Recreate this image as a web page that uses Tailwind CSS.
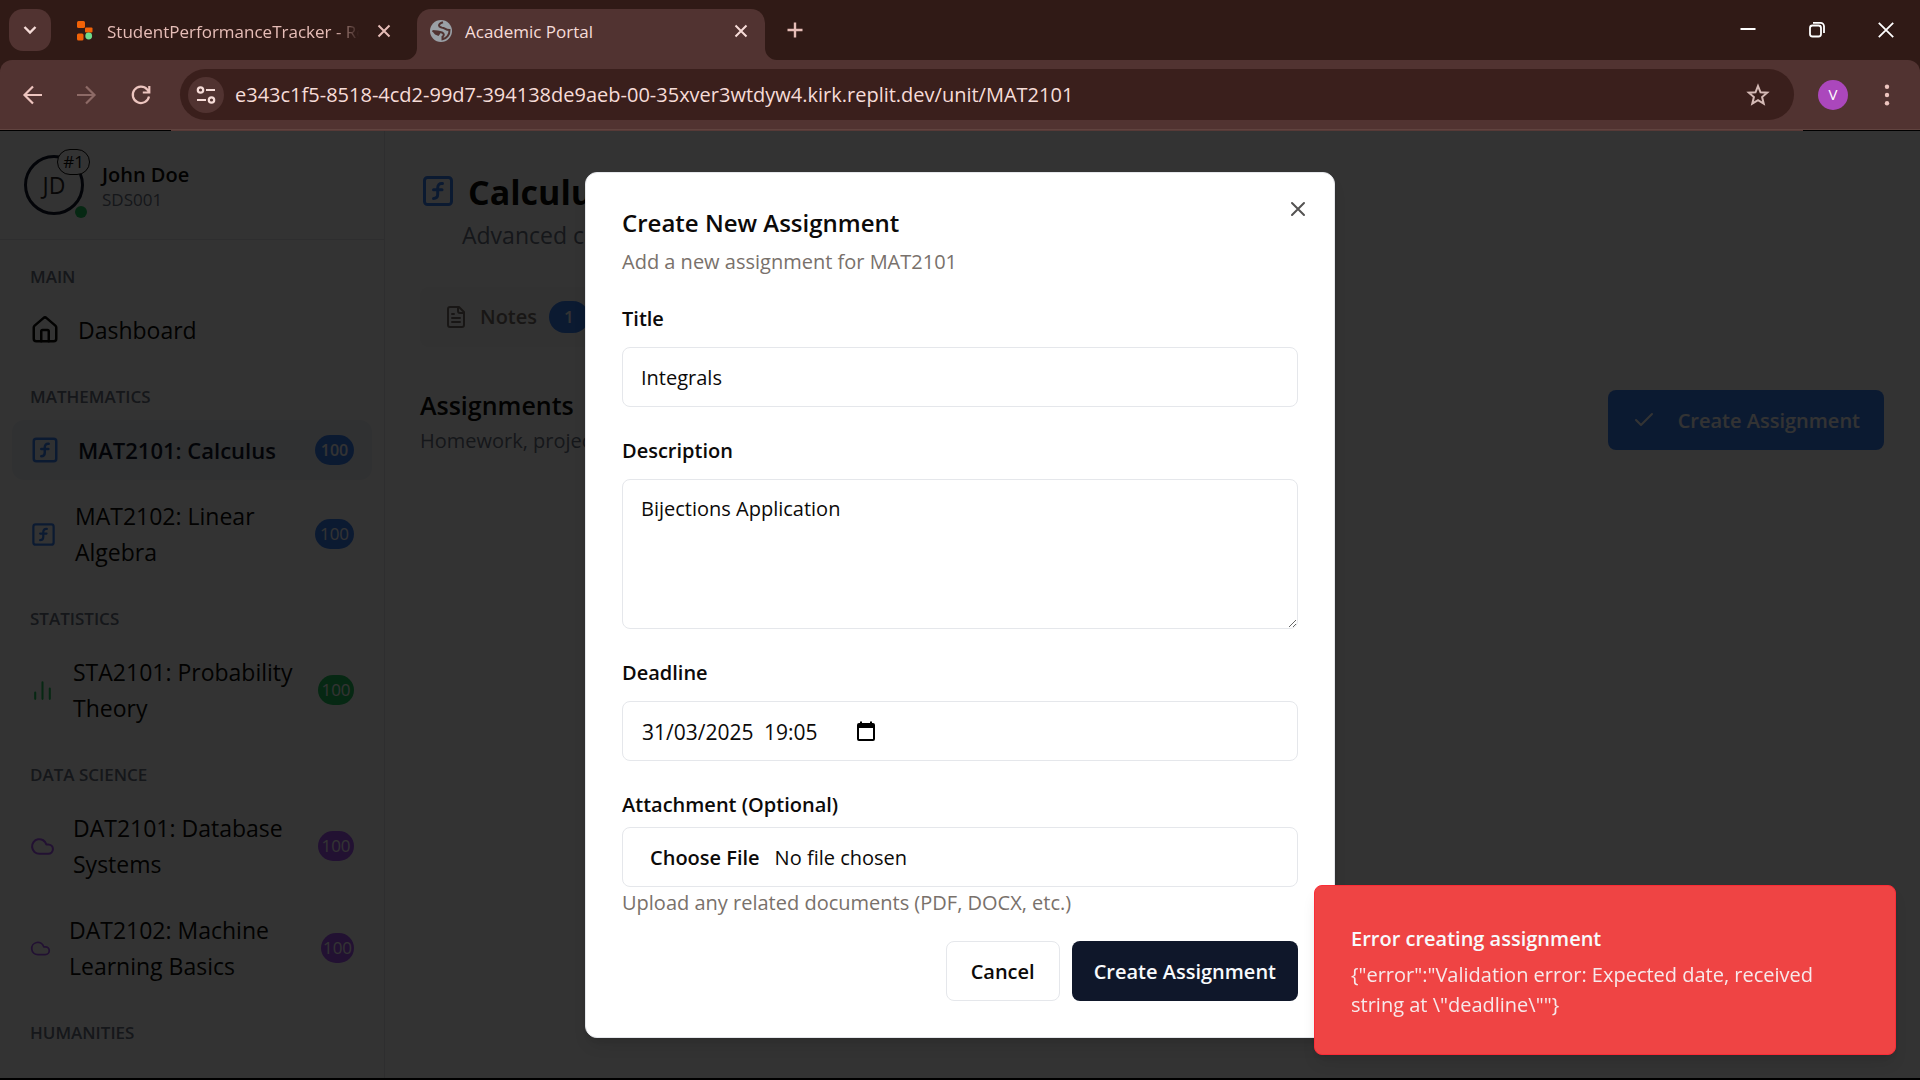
<!DOCTYPE html>
<html lang="en">
<head>
<meta charset="utf-8">
<meta name="viewport" content="width=device-width, initial-scale=1">
<title>Academic Portal</title>
<script src="https://cdn.jsdelivr.net/npm/@tailwindcss/browser@4"></script>
</head>
<body class="flex h-screen flex-col overflow-hidden bg-black font-['Open_Sans','Noto_Sans',sans-serif] text-stone-950">

<!-- Browser tab strip -->
<header class="shrink-0 bg-[#301a16] text-[17px] text-[#f6dcd8]">
  <div class="flex h-[60px] items-end">
    <button aria-label="Search tabs" class="mb-[9px] ml-[9px] flex size-[42px] items-center justify-center rounded-[14px] bg-[#513331]">
      <svg class="size-6" viewBox="0 0 24 24" fill="none" stroke="currentColor" stroke-width="2.4"><path d="M6.500 9l5.500 5.500L17.500 9"/></svg>
    </button>
    <div class="flex h-[51px] w-[366px] items-center pb-[8px] pl-[26px] text-[#e6bdb7]">
      <svg class="h-[20px] w-[16px] shrink-0" viewBox="0 0 16 20"><rect x="0" y="0" width="8" height="7" rx="1.500" fill="#f26207"/><rect x="8" y="6.500" width="7.500" height="5" rx="1" fill="#f26207"/><rect x="0" y="12.500" width="6.500" height="7" rx="1.500" fill="#f26207"/><circle cx="11.700" cy="15" r="3.400" fill="#6fdc8c"/></svg>
      <span class="ml-[14px] w-[252px] overflow-hidden whitespace-nowrap pt-0.5 mask-r-from-90% mask-r-to-100%">StudentPerformanceTracker - Replit</span>
      <button aria-label="Close tab" class="ml-4"><svg class="size-[18px]" viewBox="0 0 18 18" fill="none" stroke="currentColor" stroke-width="2"><path d="M3.500 3.500l11 11M14.500 3.500l-11 11"/></svg></button>
    </div>
    <div class="relative flex h-[51px] w-[348px] items-center rounded-t-[14px] bg-[#513331] pb-[8px] pl-[13px] pr-[15px]">
      <svg class="absolute -left-3 bottom-0 size-3" viewBox="0 0 12 12"><path d="M12 0v12H0A12 12 0 0 0 12 0z" fill="#513331"/></svg>
      <svg class="absolute -right-3 bottom-0 size-3" viewBox="0 0 12 12"><path d="M0 0v12h12A12 12 0 0 1 0 0z" fill="#513331"/></svg>
      <svg class="size-[22px] shrink-0" viewBox="0 0 22 22"><circle cx="11" cy="11" r="11" fill="#9aa0a6"/><path d="M13 2.200C10.500 3 9 3.800 9 5.500c0 1.500 1.500 1.700 3 2.200M12 7.700c2.500-.3 3.200 2.300 7.500 2.300.3 4.500-3 8.500-7 9.200v-2.500c2-1.200 1.600-3.300-.5-4.200-2.500-1-4.500-1.500-9.500-1.500" fill="none" stroke="#513331" stroke-width="2"/><path d="M2 11h5.500c2 0 3.500 1.500 2.500 3l-1.500 2-3.500-1.500z" fill="#513331"/></svg>
      <span class="ml-[13px] flex-1 pt-0.5">Academic Portal</span>
      <button aria-label="Close tab"><svg class="size-[18px]" viewBox="0 0 18 18" fill="none" stroke="currentColor" stroke-width="2"><path d="M3.500 3.500l11 11M14.500 3.500l-11 11"/></svg></button>
    </div>
    <button aria-label="New tab" class="mb-[18px] ml-[18px] text-[#e6bdb7]"><svg class="size-6" viewBox="0 0 24 24" fill="none" stroke="currentColor" stroke-width="2.400"><path d="M12 4.500v15M4.500 12h15"/></svg></button>
    <div class="mb-[18px] ml-auto mr-[22px] flex items-center gap-[45px] text-white">
      <button aria-label="Minimise"><svg class="size-6" viewBox="0 0 24 24" fill="none" stroke="currentColor" stroke-width="2"><path d="M4.500 11h15"/></svg></button>
      <button aria-label="Restore"><svg class="size-6" viewBox="0 0 24 24" fill="none" stroke="currentColor" stroke-width="1.800"><rect x="5" y="7.500" width="11" height="11" rx="2.500"/><path d="M8 4.800h7.500a3.500 3.500 0 0 1 3.500 3.500V15"/></svg></button>
      <button aria-label="Close"><svg class="size-6" viewBox="0 0 24 24" fill="none" stroke="currentColor" stroke-width="1.800"><path d="M4.800 4.800l14.400 14.400M19.200 4.800L4.800 19.200"/></svg></button>
    </div>
  </div>

  <!-- Toolbar -->
  <div class="flex h-[70px] items-center rounded-t-[12px] border-b border-[#60433f] bg-[#513331] pr-[21px] text-[#edc5bf]">
    <button aria-label="Back" class="ml-[21px]"><svg class="size-6" viewBox="0 0 24 24" fill="none" stroke="currentColor" stroke-width="2.200"><path d="M21 12H4M12 3.500L3.500 12l8.500 8.500"/></svg></button>
    <button aria-label="Forward" class="ml-[29px] text-[#8d6a66]"><svg class="size-6" viewBox="0 0 24 24" fill="none" stroke="currentColor" stroke-width="2.200"><path d="M3 12h17M12 3.500l8.500 8.500-8.500 8.500"/></svg></button>
    <button aria-label="Reload" class="ml-[31px]"><svg class="size-6" viewBox="0 0 24 24" fill="none" stroke="currentColor" stroke-width="2.200"><path d="M20 13.500A8.200 8.200 0 1 1 18.200 6.500L20 8.500M20.300 3v6.500h-6.500"/></svg></button>
    <div class="ml-[27px] flex h-[51px] flex-1 items-center rounded-full bg-[#3a1f1c] pl-2 pr-6">
      <button aria-label="View site information" class="flex size-9 items-center justify-center rounded-full bg-[#513331] text-[#f6dcd8]"><svg class="size-6" viewBox="0 0 24 24" fill="none" stroke="currentColor" stroke-width="2.200"><circle cx="6.500" cy="7" r="2.700"/><path d="M12 7h9M3 17h9"/><circle cx="17.500" cy="17" r="2.700"/></svg></button>
      <input type="text" aria-label="Address" value="e343c1f5-8518-4cd2-99d7-394138de9aeb-00-35xver3wtdyw4.kirk.replit.dev/unit/MAT2101" class="ml-[11px] min-w-0 flex-1 bg-transparent text-[20px] text-[#f6dcd8] outline-none">
      <button aria-label="Bookmark"><svg class="size-6" viewBox="0 0 24 24" fill="none" stroke="#d5bab6" stroke-width="2"><path d="M12 3l2.500 6.300 6.700.4-5.100 4.400 1.600 6.600L12 17.100l-5.700 3.600 1.600-6.600-5.100-4.400 6.700-.4z"/></svg></button>
    </div>
    <button aria-label="Profile" class="ml-6 flex size-[30px] items-center justify-center rounded-full bg-[#ab47bc] text-[15px] text-white">V</button>
    <button aria-label="Menu" class="ml-[27px]"><svg class="size-6" viewBox="0 0 24 24" fill="currentColor"><circle cx="12" cy="3.800" r="2.200"/><circle cx="12" cy="12" r="2.200"/><circle cx="12" cy="20.200" r="2.200"/></svg></button>
  </div>
  <div class="h-px bg-black pl-[171px] pr-[117px]"><div class="h-px bg-[#573a37]"></div></div>
</header>

<!-- Page -->
<div class="relative mb-[2px] flex min-h-0 flex-1 overflow-hidden bg-white">
  <aside class="w-[385px] shrink-0 border-r border-gray-200">
    <div class="flex items-center gap-[18px] border-b border-gray-200 p-6">
      <div class="relative flex size-[60px] items-center justify-center rounded-full border-3 border-slate-900 text-[23px] text-stone-800">JD
        <span class="absolute -right-[9px] -top-[9px] rounded-full border border-stone-950 bg-white px-[5px] text-[17px] leading-6 text-stone-950">#1</span>
        <span class="absolute -bottom-[6px] -right-[6px] size-3 rounded-full bg-[#22c55e]"></span>
      </div>
      <div class="pt-1">
        <p class="text-[20px] font-semibold leading-[26px]">John Doe</p>
        <p class="text-[17px] leading-6 text-gray-500">SDS001</p>
      </div>
    </div>
    <nav class="flex flex-col gap-6 px-3 py-6 text-[23px] leading-9">
      <section>
        <h2 class="mb-3 px-[18px] pt-[2px] text-[17px] font-semibold leading-[22px] text-gray-500">MAIN</h2>
        <a href="#" class="flex items-center gap-[18px] rounded-xl px-[18px] py-3">
          <svg class="size-[30px] shrink-0" viewBox="0 0 24 24" fill="none" stroke="currentColor" stroke-width="2" stroke-linecap="round" stroke-linejoin="round"><path d="M15 21v-8a1 1 0 0 0-1-1h-4a1 1 0 0 0-1 1v8"/><path d="M3 10a2 2 0 0 1 .709-1.528l7-5.999a2 2 0 0 1 2.582 0l7 5.999A2 2 0 0 1 21 10v9a2 2 0 0 1-2 2H5a2 2 0 0 1-2-2z"/></svg>
          Dashboard</a>
      </section>
      <section>
        <h2 class="mb-3 px-[18px] pt-[2px] text-[17px] font-semibold leading-[22px] text-gray-500">MATHEMATICS</h2>
        <a href="#" class="flex items-center gap-[18px] rounded-xl bg-slate-100 px-[18px] py-3 text-[22px] font-semibold text-slate-900">
          <svg class="size-[30px] shrink-0 text-[#3b82f6]" viewBox="0 0 24 24" fill="none" stroke="currentColor" stroke-width="2" stroke-linecap="round" stroke-linejoin="round"><rect width="18" height="18" x="3" y="3" rx="2"/><path d="M9 17c2 0 2.800-1 2.800-2.800V10c0-2 1-3.300 3.200-3M9 11.200h5.700"/></svg>
          <span class="flex-1">MAT2101: Calculus</span>
          <span class="flex h-[30px] w-[39px] justify-center rounded-full bg-[#3b82f6] text-[16px] leading-[30px] text-white">100</span></a>
        <a href="#" class="mt-[6px] flex items-center gap-[18px] rounded-xl px-[18px] py-3">
          <svg class="size-[27px] shrink-0 text-[#3b82f6]" viewBox="0 0 24 24" fill="none" stroke="currentColor" stroke-width="2" stroke-linecap="round" stroke-linejoin="round"><rect width="18" height="18" x="3" y="3" rx="2"/><path d="M9 17c2 0 2.800-1 2.800-2.800V10c0-2 1-3.300 3.200-3M9 11.200h5.700"/></svg>
          <span class="flex-1">MAT2102: Linear<br>Algebra</span>
          <span class="flex h-[30px] w-[39px] justify-center rounded-full bg-[#3b82f6] text-[17px] leading-[30px] text-white">100</span></a>
      </section>
      <section>
        <h2 class="mb-3 px-[18px] pt-[2px] text-[17px] font-semibold leading-[22px] text-gray-500">STATISTICS</h2>
        <a href="#" class="flex items-center gap-[18px] rounded-xl px-[18px] py-3">
          <svg class="size-[25px] shrink-0 text-[#22c55e]" viewBox="0 0 24 24" fill="none" stroke="currentColor" stroke-width="2" stroke-linecap="round" stroke-linejoin="round"><path d="M5 20v-6M12 20V4M19 20V10"/></svg>
          <span class="flex-1 whitespace-nowrap">STA2101: Probability<br>Theory</span>
          <span class="-ml-[18px] flex h-[30px] w-9 shrink-0 justify-center rounded-full bg-[#22c55e] text-[17px] leading-[30px] text-white">100</span></a>
      </section>
      <section>
        <h2 class="mb-3 px-[18px] pt-[2px] text-[17px] font-semibold leading-[22px] text-gray-500">DATA SCIENCE</h2>
        <a href="#" class="flex items-center gap-[18px] rounded-xl px-[18px] py-3">
          <svg class="size-[25px] shrink-0 text-[#a855f7]" viewBox="0 0 24 24" fill="none" stroke="currentColor" stroke-width="2" stroke-linecap="round" stroke-linejoin="round"><path d="M17.500 19H9a7 7 0 1 1 6.710-9h1.790a4.500 4.500 0 1 1 0 9Z"/></svg>
          <span class="flex-1 whitespace-nowrap">DAT2101: Database<br>Systems</span>
          <span class="-ml-[18px] flex h-[30px] w-9 shrink-0 justify-center rounded-full bg-[#a855f7] text-[17px] leading-[30px] text-white">100</span></a>
        <a href="#" class="mt-[6px] flex items-center gap-[18px] rounded-xl px-[18px] py-3">
          <svg class="size-[21px] shrink-0 text-[#a855f7]" viewBox="0 0 24 24" fill="none" stroke="currentColor" stroke-width="2" stroke-linecap="round" stroke-linejoin="round"><path d="M17.500 19H9a7 7 0 1 1 6.710-9h1.790a4.500 4.500 0 1 1 0 9Z"/></svg>
          <span class="flex-1 whitespace-nowrap">DAT2102: Machine<br>Learning Basics</span>
          <span class="-ml-[18px] flex h-[30px] w-[33px] shrink-0 justify-center rounded-full bg-[#a855f7] text-[17px] leading-[30px] text-white">100</span></a>
      </section>
      <section>
        <h2 class="px-[18px] pt-[2px] text-[17px] font-semibold leading-[22px] text-gray-500">HUMANITIES</h2>
      </section>
    </nav>
  </aside>

  <main class="min-w-0 flex-1 py-9 pl-[35px] pr-9">
    <div class="flex items-center gap-3">
      <svg class="size-9 text-[#3b82f6]" viewBox="0 0 24 24" fill="none" stroke="currentColor" stroke-width="2" stroke-linecap="round" stroke-linejoin="round"><rect width="18" height="18" x="3" y="3" rx="2"/><path d="M9 17c2 0 2.800-1 2.800-2.800V10c0-2 1-3.300 3.200-3M9 11.200h5.700"/></svg>
      <h1 class="pt-[2px] text-[34px] font-bold leading-[46px]">Calculus</h1>
    </div>
    <p class="mb-[34px] ml-[42px] mt-[2px] text-[23px] leading-9 text-gray-500">Advanced calculus</p>
    <div class="inline-flex h-[60px] items-center rounded-lg bg-stone-50 px-6 text-stone-500">
      <button class="flex items-center text-[20px] font-semibold">
        <svg class="mr-3 size-6" viewBox="0 0 24 24" fill="none" stroke="currentColor" stroke-width="2" stroke-linecap="round" stroke-linejoin="round"><path d="M15 2H6a2 2 0 0 0-2 2v16a2 2 0 0 0 2 2h12a2 2 0 0 0 2-2V7Z"/><path d="M14 2v4a2 2 0 0 0 2 2h4M10 9H8M16 13H8M16 17H8"/></svg>
        Notes <span class="ml-3 rounded-full bg-[#3b82f6] px-[15px] text-[17px] leading-8 text-white">1</span></button>
    </div>
    <div class="mt-9 flex items-center justify-between">
      <div class="pt-[2px]">
        <h2 class="text-[25px] font-semibold leading-[40px]">Assignments</h2>
        <p class="text-[20px] leading-[32px] text-gray-500">Homework, projects</p>
      </div>
      <button class="flex h-[60px] items-center rounded-lg bg-[#3b82f6] px-6 text-[20px] font-semibold text-white">
        <svg class="mr-[22px] size-6" viewBox="0 0 24 24" fill="none" stroke="currentColor" stroke-width="2" stroke-linecap="round" stroke-linejoin="round"><path d="M20 6 9 17l-5-5"/></svg>
        <span class="pt-[2px]">Create Assignment</span></button>
    </div>
  </main>

  <!-- Dialog -->
  <div class="absolute inset-0 flex items-center justify-center bg-black/80">
    <form role="dialog" aria-labelledby="dialog-title" class="relative w-[750px] rounded-xl border border-gray-200 bg-white p-9 text-[20px] leading-[30px] shadow-lg">
      <h2 id="dialog-title" class="text-[24px] font-semibold leading-[28px]">Create New Assignment</h2>
      <p class="mt-[10px] text-stone-500">Add a new assignment for MAT2101</p>
      <label for="title" class="mb-3 mt-[22px] block pt-1 font-semibold leading-8">Title</label>
      <input id="title" type="text" value="Integrals" class="block h-[60px] w-full rounded-lg border border-gray-200 px-[18px] pt-[2px] outline-none">
      <label for="description" class="mb-3 mt-6 block pt-1 font-semibold leading-8">Description</label>
      <textarea id="description" class="block h-[150px] w-full rounded-lg border border-gray-200 px-[18px] py-[14px] outline-none">Bijections Application</textarea>
      <label for="deadline" class="mb-3 mt-6 block pt-1 font-semibold leading-8">Deadline</label>
      <div class="flex h-[60px] items-center rounded-lg border border-gray-200 px-[18px]">
        <input id="deadline" type="text" value="31/03/2025" class="w-[122px] pl-px pt-[2px] text-[21px] outline-none">
        <input type="text" aria-label="Deadline time" value="19:05" class="w-[91px] pl-px pt-[2px] text-[21px] outline-none">
        <button type="button" aria-label="Show calendar"><svg class="size-6" viewBox="0 0 24 24"><path d="M19 4h-1V2.500h-2V4H8V2.500H6V4H5a2 2 0 0 0-2 2v14a2 2 0 0 0 2 2h14a2 2 0 0 0 2-2V6a2 2 0 0 0-2-2zm0 16H5V9h14z"/></svg></button>
      </div>
      <label for="attachment" class="mb-[6px] mt-6 block pt-1 font-semibold leading-8">Attachment (Optional)</label>
      <input id="attachment" type="file" class="block h-[60px] w-full rounded-lg border border-gray-200 px-[18px] py-[15px] file:mr-[6px] file:bg-transparent file:px-[9px] file:font-semibold">
      <p class="pt-[2px] leading-7 text-stone-500">Upload any related documents (PDF, DOCX, etc.)</p>
      <div class="mt-6 flex justify-end gap-3 font-semibold">
        <button type="button" class="h-[60px] rounded-lg border border-gray-200 px-6 pt-[2px]">Cancel</button>
        <button type="button" class="h-[60px] rounded-lg bg-[#0f172a] px-[22px] pt-[2px] text-slate-50">Create Assignment</button>
      </div>
      <button type="button" aria-label="Close" class="absolute right-6 top-6 opacity-70"><svg class="size-6" viewBox="0 0 24 24" fill="none" stroke="currentColor" stroke-width="2" stroke-linecap="round"><path d="M18 6 6 18M6 6l12 12"/></svg></button>
    </form>
  </div>

  <!-- Toast -->
  <div role="alert" class="absolute bottom-[23px] right-6 w-[582px] rounded-lg border border-red-500 bg-[#ef4444] px-9 pb-[34px] pt-[38px] text-[20px] leading-[30px] text-slate-50 shadow-lg">
    <p class="font-semibold">Error creating assignment</p>
    <p class="mt-[6px] pr-9 opacity-90">{"error":"Validation error: Expected date, received string at \"deadline\""}</p>
  </div>
</div>
</body>
</html>
